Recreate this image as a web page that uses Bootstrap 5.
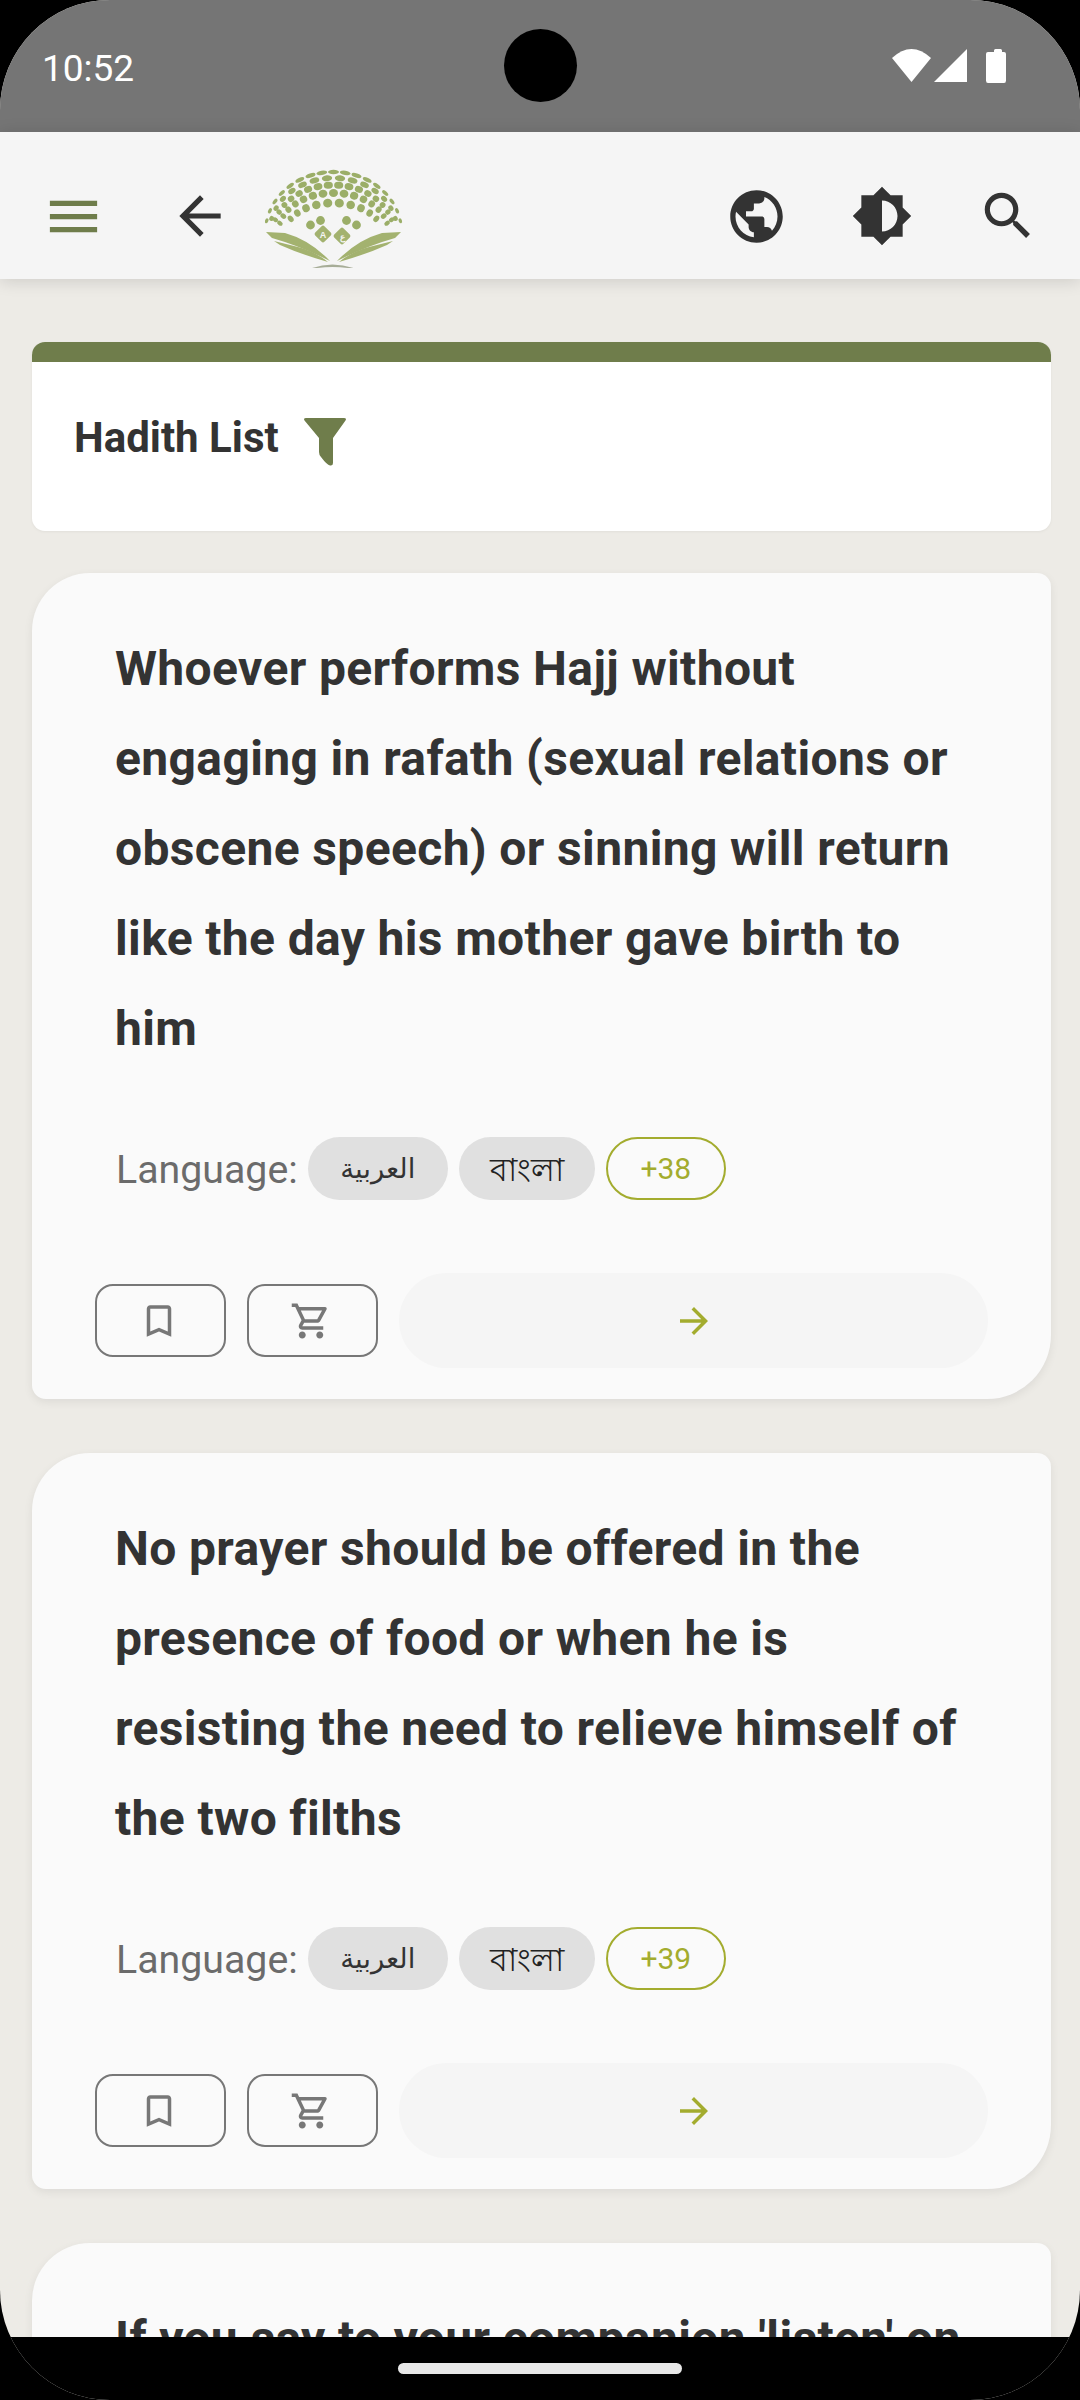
<!DOCTYPE html>
<html lang="en">
<head>
<meta charset="utf-8">
<title>Hadith List</title>
<link href="https://cdn.jsdelivr.net/npm/bootstrap@5.3.0/dist/css/bootstrap.min.css" rel="stylesheet">
<style>
html,body{margin:0;height:2400px;overflow:hidden;background:#000}
body{font-family:Roboto,"Noto Sans",sans-serif;color:#333}
.screen{width:1080px;height:2400px;border-radius:110px;overflow:hidden;background:#edebe6;position:relative}
.statusbar{height:132px;background:#757575;color:#fff;padding:0 73px 0 42px;flex:none}
.status-time{font-size:37px;line-height:1;margin-top:50px;font-weight:400}
.status-icons{margin-top:48px}
.camera{position:absolute;left:504px;top:29px;width:73px;height:73px;border-radius:50%;background:#000}
.appbar{height:147px;background:#f5f5f5;padding:32px 41px 11px 42px;flex:none;box-shadow:0 2px 16px rgba(0,0,0,.14);position:relative;z-index:2;flex-wrap:nowrap}
.ic-ink{fill:#333}.ic-olive{fill:#6f7d4b}
.gap-a{margin-left:64px}.gap-b{margin-left:34px}.gap-c{margin-left:63px}.gap-d{margin-left:64px}
.logo-dot{fill:#9bae68}.logo-leaf{fill:#a3b26f}.logo-base{fill:#a7ad98}
.logo-letter{fill:#f5f5f5;font-family:"Liberation Sans",sans-serif;font-size:9px;font-weight:700;text-anchor:middle}
.content{flex:1 1 auto;min-height:0;overflow:hidden;padding:63px 29px 0 32px}
.head-card{border:0;border-radius:13px;background:#fff;overflow:hidden;box-shadow:0 1px 3px rgba(0,0,0,.05);margin-bottom:42px}
.head-strip{height:20px;background:#6f7d4b}
.head-body{padding:46px 42px 63px}
.head-title{font-size:42px;line-height:60px;font-weight:700;margin:0}
.funnel{margin-left:24px;margin-top:8px}
.hadith{border:0;background:#fafafa;border-radius:58px 14px 64px 14px;box-shadow:0 3px 10px rgba(0,0,0,.07);padding:51px 63px 31px 63px;margin-bottom:54px}
.hadith-title{font-size:48px;line-height:90px;font-weight:700;margin:0 0 63px 20px;letter-spacing:.36px}
.lang-row{margin-left:21px;height:63px;margin-bottom:73px}
.lang-label{font-size:39.300px;color:#6b6b6b;margin-right:10px;position:relative;top:2px}
.chip{height:63px;border-radius:32px;font-weight:400;display:flex;align-items:center;justify-content:center;padding:0}
.chip-ar{width:140px;background:#e0e0e0;color:#333;font-size:27.500px;font-family:"DejaVu Sans",sans-serif;margin-right:11px}
.chip-bn{width:136px;background:#e0e0e0;color:#222;font-size:32px;font-family:"Noto Sans",sans-serif;margin-right:11px}
.chip-more{width:120px;border:2px solid #a3ac2e;color:#a3ac2e;font-size:30px;background:transparent}
.act{height:95px}
.act-btn{width:131px;height:73px;border:2px solid #777;border-radius:18px;padding:0 3px 0 0;background:transparent;display:flex;align-items:center;justify-content:center}
.act-gap{margin-left:21px}
.go-pill{flex:1 1 auto;height:95px;margin-left:21px;background:#f5f5f5;border:0;border-radius:48px;display:flex;align-items:center;justify-content:center;padding:0}
.ic-gray{fill:#777}.ic-lime{fill:#a3ac2e}
.navstrip{height:63px;background:#000;flex:none;position:relative;z-index:3}
.home-pill{width:284px;height:11px;background:#e8e8e8;border-radius:6px;margin-top:26px}
</style>
</head>
<body>
<div class="screen d-flex flex-column">
  <div class="statusbar d-flex justify-content-between align-items-start">
    <div class="status-time">10:52</div>
    <svg class="status-icons" width="115" height="36" viewBox="892 48 115 36" aria-hidden="true"><path fill="#fff" d="M892 58Q911.500 40 931 58L911.500 82Z"/><path fill="#fff" d="M934 82L967 49V82Z"/><path fill="#fff" d="M994 52V50.500Q994 49 995.500 49H1000.500Q1002 49 1002 50.500V52H1004Q1006 52 1006 54V80.500Q1006 83 1004 83H988Q986 83 986 80.500V54Q986 52 988 52Z"/></svg>
  </div>
  <div class="camera"></div>
  <nav class="navbar appbar d-flex align-items-center justify-content-start">
    <svg width="63" height="63" viewBox="0 0 24 24" aria-hidden="true"><path class="ic-olive" d="M3 18h18v-2H3v2zm0-5h18v-2H3v2zm0-7v2h18V6H3z"/></svg>
    <svg class="gap-a" width="62" height="62" viewBox="0 0 24 24" aria-hidden="true"><path class="ic-ink" d="M20 11H7.830l5.590-5.590L12 4l-8 8 8 8 1.410-1.410L7.830 13H20v-2z"/></svg>
    <svg class="gap-b" width="138" height="104" viewBox="265 164 138 104" aria-hidden="true">
      <g id="dome"></g>
      <path class="logo-leaf" d="M266 232L285 233Q310 240 330 261Q300 246 272 238Z"/>
      <path class="logo-leaf" d="M274 241L298 247Q316 252 328 262Q300 254 280 245Z"/>
      <path class="logo-leaf" d="M401 232L382 233Q357 240 337 261Q367 246 395 238Z"/>
      <path class="logo-leaf" d="M393 241L369 247Q351 252 339 262Q367 254 387 245Z"/>
      <path class="logo-base" d="M307 270Q332 259 359 270Q332 264 307 270Z"/>
      <rect class="logo-leaf" x="-6.500" y="-6.500" width="13" height="13" rx="2" transform="translate(323 234) rotate(45)"/>
      <rect class="logo-leaf" x="-6.500" y="-6.500" width="13" height="13" rx="2" transform="translate(342 236) rotate(45)"/>
      <text class="logo-letter" x="323" y="237.500">A</text>
      <text class="logo-letter" x="342" y="239.500">ع</text>
    </svg>
    <div class="flex-grow-1"></div>
    <svg width="63" height="63" viewBox="0 0 24 24" aria-hidden="true"><path class="ic-ink" d="M12 2C6.480 2 2 6.480 2 12s4.480 10 10 10 10-4.480 10-10S17.520 2 12 2zm-1 17.930c-3.950-.49-7-3.850-7-7.930 0-.62.08-1.210.21-1.790L9 15v1c0 1.100.9 2 2 2v1.930zm6.900-2.540c-.26-.81-1-1.390-1.900-1.390h-1v-3c0-.55-.45-1-1-1H8v-2h2c.55 0 1-.45 1-1V7h2c1.100 0 2-.9 2-2v-.41c2.930 1.190 5 4.060 5 7.410 0 2.080-.8 3.970-2.100 5.390z"/></svg>
    <svg class="gap-c" width="62" height="62" viewBox="0 0 24 24" aria-hidden="true"><path class="ic-ink" d="M20 15.310L23.310 12 20 8.690V4h-4.690L12 .69 8.690 4H4v4.690L.69 12 4 15.310V20h4.690L12 23.310 15.310 20H20v-4.690zM12 18V6c3.310 0 6 2.690 6 6s-2.690 6-6 6z"/></svg>
    <svg class="gap-d" width="62" height="62" viewBox="0 0 24 24" aria-hidden="true"><path class="ic-ink" d="M15.500 14h-.79l-.28-.27C15.410 12.590 16 11.110 16 9.500 16 5.910 13.090 3 9.500 3S3 5.910 3 9.500 5.910 16 9.500 16c1.610 0 3.090-.59 4.230-1.570l.27.28v.79l5 4.990L20.490 19l-4.990-5zm-6 0C7.010 14 5 11.990 5 9.500S7.010 5 9.500 5 14 7.010 14 9.500 11.990 14 9.500 14z"/></svg>
  </nav>

  <main class="content">
    <div class="card head-card">
      <div class="head-strip"></div>
      <div class="head-body d-flex align-items-center">
        <h1 class="head-title">Hadith List</h1>
        <svg class="funnel" width="44" height="48" viewBox="0 0 44 48" aria-hidden="true"><path class="ic-olive" d="M3 0H41Q44 0 42.500 2.500L30 20V45Q30 48 27 47.500Q24 47 18 39Q16 37 16 34V20L1.500 2.500Q0 0 3 0Z"/></svg>
      </div>
    </div>

    <article class="card hadith">
      <h2 class="hadith-title">Whoever performs Hajj without<br>engaging in rafath (sexual relations or<br>obscene speech) or sinning will return<br>like the day his mother gave birth to<br>him</h2>
      <div class="lang-row d-flex align-items-center">
        <span class="lang-label">Language:</span>
        <span class="badge chip chip-ar">العربية</span>
        <span class="badge chip chip-bn">বাংলা</span>
        <span class="badge chip chip-more">+38</span>
      </div>
      <div class="act d-flex align-items-center">
        <button type="button" class="btn act-btn" aria-label="Bookmark"><svg width="42" height="42" viewBox="0 0 24 24" aria-hidden="true"><path class="ic-gray" d="M17 3H7c-1.100 0-1.990.9-1.990 2L5 21l7-3 7 3V5c0-1.100-.9-2-2-2zm0 15l-5-2.180L7 18V5h10v13z"/></svg></button>
        <button type="button" class="btn act-btn act-gap" aria-label="Cart"><svg width="42" height="42" viewBox="0 0 24 24" aria-hidden="true"><path class="ic-gray" d="M15.550 13c.75 0 1.410-.41 1.750-1.030l3.580-6.490c.37-.66-.11-1.480-.87-1.480H5.210l-.94-2H1v2h2l3.600 7.590-1.350 2.440C4.520 15.370 5.480 17 7 17h12v-2H7l1.100-2h7.450zM6.160 6h12.150l-2.760 5H8.530L6.160 6zM7 18c-1.100 0-1.990.9-1.990 2S5.900 22 7 22s2-.9 2-2-.9-2-2-2zm10 0c-1.100 0-1.990.9-1.990 2s.89 2 1.990 2 2-.9 2-2-.9-2-2-2z"/></svg></button>
        <button type="button" class="btn go-pill" aria-label="Open"><svg width="42" height="42" viewBox="0 0 24 24" aria-hidden="true"><path class="ic-lime" d="M12 4l-1.410 1.410L16.170 11H4v2h12.170l-5.580 5.590L12 20l8-8z"/></svg></button>
      </div>
    </article>

    <article class="card hadith">
      <h2 class="hadith-title">No prayer should be offered in the<br>presence of food or when he is<br>resisting the need to relieve himself of<br>the two filths</h2>
      <div class="lang-row d-flex align-items-center">
        <span class="lang-label">Language:</span>
        <span class="badge chip chip-ar">العربية</span>
        <span class="badge chip chip-bn">বাংলা</span>
        <span class="badge chip chip-more">+39</span>
      </div>
      <div class="act d-flex align-items-center">
        <button type="button" class="btn act-btn" aria-label="Bookmark"><svg width="42" height="42" viewBox="0 0 24 24" aria-hidden="true"><path class="ic-gray" d="M17 3H7c-1.100 0-1.990.9-1.990 2L5 21l7-3 7 3V5c0-1.100-.9-2-2-2zm0 15l-5-2.180L7 18V5h10v13z"/></svg></button>
        <button type="button" class="btn act-btn act-gap" aria-label="Cart"><svg width="42" height="42" viewBox="0 0 24 24" aria-hidden="true"><path class="ic-gray" d="M15.550 13c.75 0 1.410-.41 1.750-1.030l3.580-6.490c.37-.66-.11-1.480-.87-1.480H5.210l-.94-2H1v2h2l3.600 7.590-1.350 2.440C4.520 15.370 5.480 17 7 17h12v-2H7l1.100-2h7.450zM6.160 6h12.150l-2.760 5H8.530L6.160 6zM7 18c-1.100 0-1.990.9-1.990 2S5.900 22 7 22s2-.9 2-2-.9-2-2-2zm10 0c-1.100 0-1.990.9-1.990 2s.89 2 1.990 2 2-.9 2-2-.9-2-2-2z"/></svg></button>
        <button type="button" class="btn go-pill" aria-label="Open"><svg width="42" height="42" viewBox="0 0 24 24" aria-hidden="true"><path class="ic-lime" d="M12 4l-1.410 1.410L16.170 11H4v2h12.170l-5.580 5.590L12 20l8-8z"/></svg></button>
      </div>
    </article>

    <article class="card hadith">
      <h2 class="hadith-title">If you say to your companion 'listen' on</h2>
    </article>
  </main>

  <div class="navstrip d-flex justify-content-center"><div class="home-pill"></div></div>
</div>
<script src="https://cdn.jsdelivr.net/npm/bootstrap@5.3.0/dist/js/bootstrap.bundle.min.js"></script>
<script>
(function(){
  var NS='http://www.w3.org/2000/svg',g=document.getElementById('dome'),cx=333.5,cy=232;
  var rows=[[29,48,14,.5,4.6,4.4,76],[39,55,11,0,4.5,4,78],[47,60,10,.5,4.6,3.5,82],[54,64,11.600,.5,5.200,3,84],[60,68,9.900,0,5.500,2.200,86]];
  function dot(x,y,rx,ry,rot){var e=document.createElementNS(NS,'ellipse');e.setAttribute('class','logo-dot');e.setAttribute('rx',rx);e.setAttribute('ry',ry);e.setAttribute('transform','translate('+x.toFixed(1)+' '+y.toFixed(1)+') rotate('+rot.toFixed(1)+')');g.appendChild(e);}
  rows.forEach(function(r){
    for(var a=r[2]*r[3];a<r[6];a+=r[2]){
      var t=a*Math.PI/180,s=Math.sin(t),c=Math.cos(t),k=1-0.55*s*s;
      var x=r[1]*s,y=-r[0]*c,rot=a*r[0]/r[1];
      dot(cx+x,cy+y,r[4]*k,r[5]*(1-0.25*s*s),rot);
      if(a>0)dot(cx-x,cy+y,r[4]*k,r[5]*(1-0.25*s*s),-rot);
    }
  });
  [[-13,-11.500],[-23,-7],[13,-11.500],[23,-7]].forEach(function(p){dot(cx+p[0],cy+p[1],4.4,4.4,0);});
})();
</script>
</body>
</html>
